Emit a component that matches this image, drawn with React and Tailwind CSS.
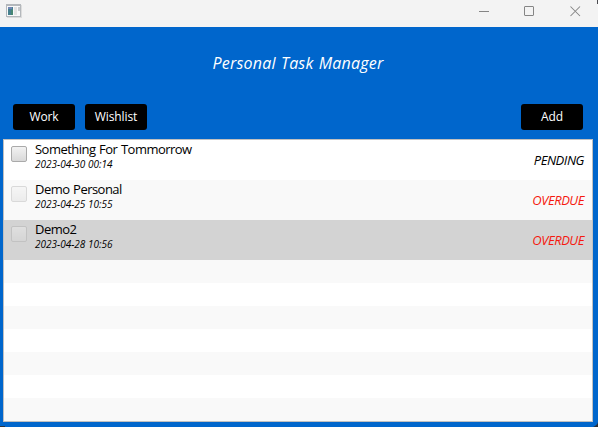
const tasks = [
  { title: "Something For Tommorrow", date: "2023-04-30 00:14", status: "PENDING", row: "bg-white", color: "text-black", box: "" },
  { title: "Demo Personal", date: "2023-04-25 10:55", status: "OVERDUE", row: "bg-[#f9f9f9]", color: "text-[#f5190f]", box: "opacity-40" },
  { title: "Demo2", date: "2023-04-28 10:56", status: "OVERDUE", row: "bg-[#d3d3d3]", color: "text-[#f5190f]", box: "opacity-40" },
];

const emptyRows = Array.from({ length: 7 }, (_, i) => i);

function AppIcon() {
  return (
    <svg width="17" height="15" viewBox="0 0 17 15" shapeRendering="crispEdges">
      <rect x="1" y="1" width="15" height="13" fill="#dcdcdc" />
      <rect x="0" y="0" width="15" height="13" fill="#b4b8bc" />
      <rect x="1" y="2" width="13" height="10" fill="#f8f8f8" />
      <rect x="2" y="3" width="5" height="8" fill="#46808e" />
      <rect x="2" y="3" width="4" height="2" fill="#7186b5" />
      <rect x="5" y="6" width="2" height="5" fill="#468672" />
      <rect x="8" y="3" width="3" height="8" fill="#e3e3e3" />
      <rect x="12" y="3" width="2" height="4" fill="#c7cacd" />
    </svg>
  );
}

function TitleBar() {
  return (
    <header className="flex h-[27px] items-start justify-between bg-[#f3f3f3] pl-[6px] pr-[16px]">
      <div className="pt-[4px]"><AppIcon /></div>
      <svg className="mt-[5px]" width="103" height="13" viewBox="0 0 103 13" fill="none" stroke="#858585" strokeWidth="1">
        <path d="M0 6.5h10" />
        <rect x="45.5" y="1.5" width="9" height="9" rx="0.5" />
        <path d="M91.5 1.5l9.5 9.5M101 1.5l-9.5 9.5" strokeWidth="1.05" />
      </svg>
    </header>
  );
}

function Button({ children }) {
  return (
    <button className="flex h-[26px] w-[62px] items-center justify-center rounded-[3px] bg-black text-[12px] leading-[16px] tracking-[-0.1px] text-white">
      {children}
    </button>
  );
}

function Task({ task }) {
  return (
    <li className={`flex h-[40px] pl-[7px] pr-[8px] ${task.row}`}>
      <span className={`mt-[6px] h-[16px] w-[16px] shrink-0 rounded-[2px] border border-[#aaa] bg-linear-to-b from-[#f2f2f2] to-[#d9d9d9] ${task.box}`} />
      <div className="ml-[8px] flex-1">
        <div className="h-[18px] text-[13px] leading-[19px] tracking-[-0.53px] [word-spacing:0.8px] text-black">{task.title}</div>
        <div className="text-[10px] leading-[12px] italic text-black">{task.date}</div>
      </div>
      <span className={`mt-[12px] text-[13px] leading-[17px] tracking-[-0.45px] italic ${task.color}`}>{task.status}</span>
    </li>
  );
}

export default function App() {
  return (
    <div className="relative flex h-[427px] w-[598px] flex-col overflow-hidden bg-[#0066cc] font-['Open_Sans','Noto_Sans',sans-serif]">
      <TitleBar />
      <h1 className="h-[77px] pr-[2px] pt-[25px] text-center text-[16px] leading-[22px] tracking-[0.2px] [word-spacing:0.9px] italic text-white">Personal Task Manager</h1>
      <nav className="flex h-[35px] gap-[10px] pl-[13px] pr-[15px]">
        <Button>Work</Button>
        <Button>Wishlist</Button>
        <div className="flex-1" />
        <Button>Add</Button>
      </nav>
      <ul className="ml-[3px] h-[283px] w-[590px] border border-[#c0c0c0]">
        {tasks.map((task) => <Task key={task.title} task={task} />)}
        {emptyRows.map((i) => <li key={i} className={`h-[23px] ${i % 2 === 0 ? "bg-[#f9f9f9]" : "bg-white"}`} />)}
      </ul>
      {/* desktop showing past the rounded window corners */}
      <span className="absolute top-0 right-0 h-[4px] w-[1px] bg-[#4a4a4e]" />
      <span className="absolute bottom-0 left-0 h-[1px] w-[5px] bg-[#2b3440]" />
      <svg className="absolute right-0 bottom-0" width="5" height="5" viewBox="0 0 5 5" fill="#2b2f36">
        <path d="M5 0Q4.5 3 0 5H5Z" />
      </svg>
    </div>
  );
}
